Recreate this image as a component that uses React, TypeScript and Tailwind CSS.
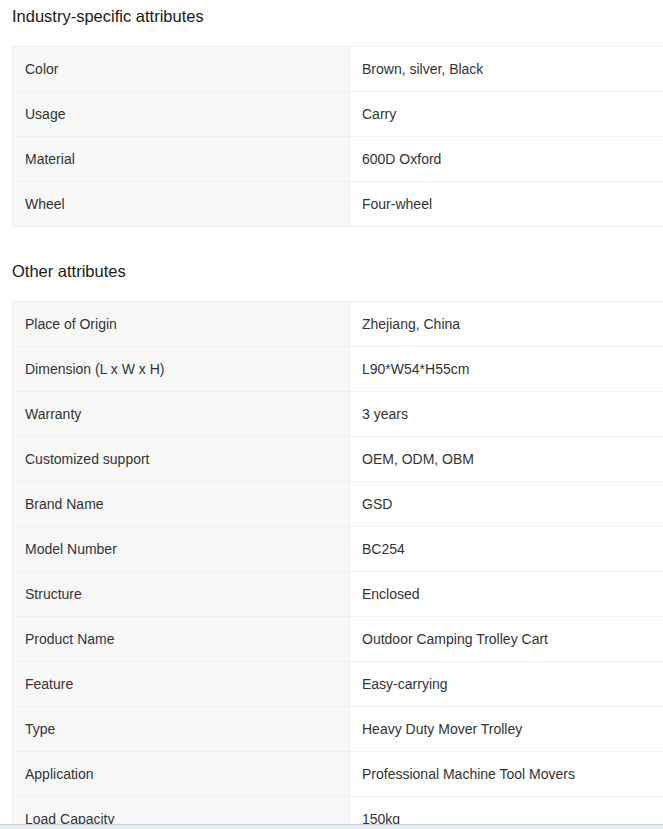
const industry = [
  ["Color", "Brown, silver, Black"],
  ["Usage", "Carry"],
  ["Material", "600D Oxford"],
  ["Wheel", "Four-wheel"],
];

const other = [
  ["Place of Origin", "Zhejiang, China"],
  ["Dimension (L x W x H)", "L90*W54*H55cm"],
  ["Warranty", "3 years"],
  ["Customized support", "OEM, ODM, OBM"],
  ["Brand Name", "GSD"],
  ["Model Number", "BC254"],
  ["Structure", "Enclosed"],
  ["Product Name", "Outdoor Camping Trolley Cart"],
  ["Feature", "Easy-carrying"],
  ["Type", "Heavy Duty Mover Trolley"],
  ["Application", "Professional Machine Tool Movers"],
  ["Load Capacity", "150kg"],
];

function AttrTable({ rows }: { rows: string[][] }) {
  return (
    <div className="ml-3 w-[680px] border-l border-t border-[#efefef] grid grid-cols-[337px_1fr]">
      {rows.map(([k, v]) => (
        <div key={k} className="contents">
          <div className="h-[45px] flex items-center pl-3 bg-[#f8f8f8] border-r border-b border-[#efefef] text-[14px] text-[#333]">
            {k}
          </div>
          <div className="h-[45px] flex items-center pl-3 border-r border-b border-[#efefef] text-[14px] text-[#333]">
            {v}
          </div>
        </div>
      ))}
    </div>
  );
}

export default function App() {
  return (
    <div className="relative h-[829px] w-[663px] overflow-hidden bg-white font-['Liberation_Sans',Arial,sans-serif]">
      <h3 className="pl-3 h-8 leading-8 text-[16.5px] text-[#1a1a1a] mb-[14px]">
        Industry-specific attributes
      </h3>
      <AttrTable rows={industry} />
      <h3 className="pl-3 mt-7 h-8 leading-8 text-[16.5px] text-[#1a1a1a] mb-[14px]">
        Other attributes
      </h3>
      <AttrTable rows={other} />
      <div className="absolute left-0 right-0 bottom-0 h-[5px] border-t border-[#c9d2d8] bg-[#e7eef2]" />
    </div>
  );
}
